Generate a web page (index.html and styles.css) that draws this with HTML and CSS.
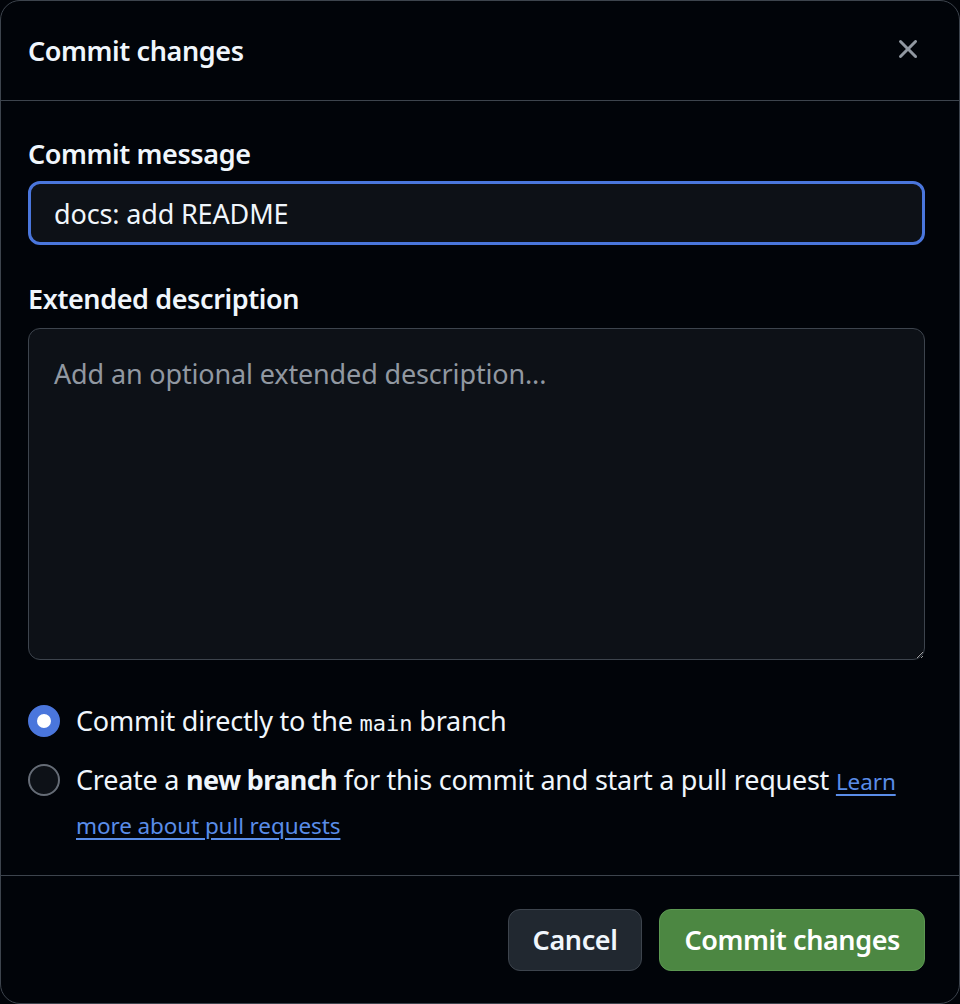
FILE: index.html
```html
<!DOCTYPE html>
<html lang="en">
<head>
  <meta charset="utf-8">
  <title>Commit changes</title>
  <link rel="stylesheet" href="styles.css">
</head>
<body>
  <div class="dialog" role="dialog" aria-labelledby="dialog-title">
    <header class="dialog-header">
      <h1 class="dialog-title" id="dialog-title">Commit changes</h1>
      <button class="close-btn" type="button" aria-label="Close">
        <svg viewBox="0 0 16 16" width="32" height="32" aria-hidden="true">
          <path d="M3.72 3.72a.75.75 0 0 1 1.060 0L8 6.94l3.22-3.22a.749.749 0 0 1 1.275.326.749.749 0 0 1-.215.734L9.06 8l3.22 3.22a.749.749 0 0 1-.326 1.275.749.749 0 0 1-.734-.215L8 9.06l-3.22 3.22a.751.751 0 0 1-1.042-.018.751.751 0 0 1-.018-1.042L6.94 8 3.72 4.78a.75.75 0 0 1 0-1.06Z"></path>
        </svg>
      </button>
    </header>

    <div class="dialog-body">
      <label class="field-label" for="message">Commit message</label>
      <input class="text-input" id="message" type="text" value="docs: add README">

      <label class="field-label field-label-spaced" for="description">Extended description</label>
      <textarea class="text-area" id="description" placeholder="Add an optional extended description..."></textarea>

      <div class="choices">
        <label class="choice">
          <input class="radio" type="radio" name="branch" checked>
          <span>Commit directly to the <code>main</code> branch</span>
        </label>
        <label class="choice">
          <input class="radio" type="radio" name="branch">
          <span>Create a <strong>new branch</strong> for this commit and start a pull request <a href="#">Learn more about pull requests</a></span>
        </label>
      </div>
    </div>

    <footer class="dialog-footer">
      <button class="btn" type="button">Cancel</button>
      <button class="btn btn-primary" type="button">Commit changes</button>
    </footer>
  </div>
</body>
</html>
```

FILE: styles.css
```css
html, body {
  margin: 0;
  height: 100%;
  background: #010409;
}

body {
  font-family: "Noto Sans", "Open Sans", sans-serif;
  font-size: 27px;
  line-height: 42px;
  letter-spacing: -0.15px;
  color: #f0f6fc;
  color-scheme: dark;
}

.dialog {
  box-sizing: border-box;
  height: 100vh;
  display: flex;
  flex-direction: column;
  background: #010409;
  border: 1px solid #3d444d;
  border-radius: 20px;
  overflow: hidden;
}

/* header */
.dialog-header {
  height: 99px;
  flex: none;
  display: flex;
  align-items: center;
  justify-content: space-between;
  padding: 0 35px 0 27px;
  border-bottom: 1px solid #3d444d;
}

.dialog-title {
  margin: 0;
  font-size: 27px;
  font-weight: 600;
  letter-spacing: -0.4px;
}

.close-btn {
  width: 32px;
  height: 32px;
  padding: 0;
  margin-top: -4px;
  border: 0;
  background: none;
  color: #9198a1;
  fill: currentColor;
  cursor: pointer;
  display: flex;
}

/* body */
.dialog-body {
  flex: 1;
  padding: 32px 34px 0 27px;
  display: flex;
  flex-direction: column;
}

.field-label {
  font-weight: 600;
  letter-spacing: -0.4px;
  margin-bottom: 6px;
}

.field-label-spaced {
  margin-top: 33px;
  margin-bottom: 8px;
}

.text-input,
.text-area {
  box-sizing: border-box;
  width: 100%;
  margin: 0;
  font: inherit;
  letter-spacing: inherit;
  color: #f0f6fc;
  background: #0d1117;
  border-radius: 12px;
  outline: none;
}

.text-input {
  height: 64px;
  padding: 0 23px;
  border: 3px solid #4a76dc;
}

.text-area {
  height: 332px;
  padding: 24px 25px;
  border: 1px solid #3d444d;
  resize: vertical;
}

.text-area::placeholder {
  color: #9198a1;
}

/* branch choice */
.choices {
  margin-top: 40px;
  display: flex;
  flex-direction: column;
  gap: 14px;
}

.choice {
  display: flex;
  align-items: flex-start;
  gap: 16px;
  letter-spacing: -0.25px;
}

.radio {
  appearance: none;
  flex: none;
  box-sizing: border-box;
  width: 32px;
  height: 32px;
  margin: 5px 0 0;
  border: 2px solid #656c76;
  border-radius: 50%;
  background: #0d1117;
}

.radio:checked {
  border: 9px solid #4a76dc;
  background: #fff;
}

.choice code {
  font-family: "DejaVu Sans Mono", "Liberation Mono", monospace;
  font-size: 22px;
  letter-spacing: 0;
}

.choice strong {
  font-weight: 700;
  letter-spacing: -0.6px;
}

.choice a {
  font-size: 22.5px;
  letter-spacing: -0.1px;
  color: #5a8de8;
  text-decoration: underline;
  text-underline-offset: 4px;
}

/* footer */
.dialog-footer {
  flex: none;
  display: flex;
  justify-content: flex-end;
  gap: 17px;
  padding: 33px 34px 32px;
  border-top: 1px solid #3d444d;
}

.btn {
  height: 62px;
  padding: 0 24px;
  font: inherit;
  font-weight: 600;
  letter-spacing: -0.4px;
  color: #f0f6fc;
  background: #212830;
  border: 1px solid #3d444d;
  border-radius: 12px;
  cursor: pointer;
}

.btn-primary {
  color: #fff;
  background: #4c8742;
  border-color: #5c9852;
}
```
